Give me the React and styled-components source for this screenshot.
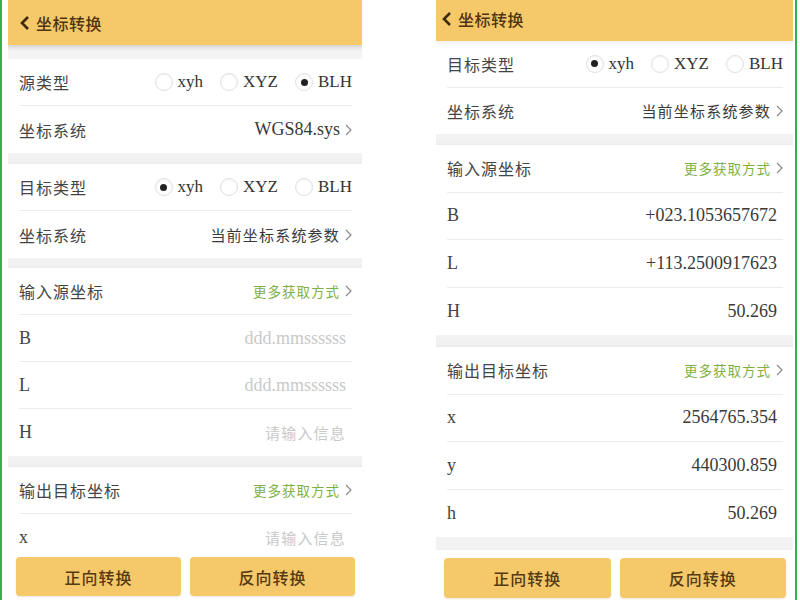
import React from "react";
import styled, { createGlobalStyle } from "styled-components";

const GlobalStyle = createGlobalStyle`
  html, body {
    margin: 0;
    padding: 0;
    background: #ffffff;
  }
  body {
    font-family: "Liberation Serif", "Noto Sans CJK SC", serif;
  }
`;

const Frame = styled.div`
  width: 797px;
  height: 600px;
  box-sizing: border-box;
  border-left: 2px solid #2fb34c;
  border-right: 2px solid #2fb34c;
  padding-left: 6px;
  display: flex;
  gap: 74px;
  background: #ffffff;
  overflow: hidden;
`;

const Phone = styled.div`
  width: ${(p) => p.$w}px;
  height: 600px;
  display: flex;
  flex-direction: column;
  background: #ffffff;
  overflow: hidden;
`;

const Header = styled.div`
  height: ${(p) => p.$h}px;
  flex-shrink: 0;
  display: flex;
  align-items: center;
  gap: 6px;
  padding-left: ${(p) => p.$pad}px;
  padding-bottom: ${(p) => p.$lift}px;
  box-sizing: border-box;
  background: #f5c86a;
  box-shadow: 0 2px 4px rgba(0, 0, 0, 0.08);
  position: relative;
  z-index: 1;
`;

const Title = styled.span`
  font-family: "Noto Sans CJK SC", sans-serif;
  font-size: 16px;
  font-weight: 500;
  color: #4f3510;
  letter-spacing: 0.5px;
`;

const Content = styled.div`
  flex: 1;
  overflow: hidden;
  background: #f3f3f3;
`;

const Gap = styled.div`
  height: ${(p) => p.$h}px;
  background: ${(p) =>
    p.$shade
      ? "linear-gradient(#e4e4e4, #f3f3f3 45%, #f5f5f5)"
      : "linear-gradient(#f3f3f3, #f1f1f1 80%, #e9e9e9)"};
`;

const Group = styled.div`
  background: #ffffff;
`;

const Row = styled.div`
  height: ${(p) => p.$h}px;
  margin: 0 10px 0 11px;
  display: flex;
  align-items: center;
  justify-content: space-between;
  box-sizing: border-box;
  border-bottom: ${(p) => (p.$last ? "none" : "1px solid #ededed")};
`;

const Label = styled.span`
  font-size: ${(p) => (p.$latin ? 18 : 16)}px;
  color: #444444;
  letter-spacing: ${(p) => (p.$latin ? 0 : 1)}px;
`;

const Right = styled.div`
  display: flex;
  align-items: center;
  gap: 5px;
  padding-right: ${(p) => (p.$inset ? 6 : 0)}px;
`;

const Value = styled.span`
  font-size: ${(p) => (p.$cjk ? 15 : 18)}px;
  color: ${(p) => (p.$placeholder ? "#c9c9c9" : "#3a3a3a")};
  letter-spacing: ${(p) => (p.$cjk ? 1.2 : 0)}px;
`;

const Link = styled.span`
  font-family: "Noto Sans CJK SC", sans-serif;
  font-size: 13.5px;
  color: #7fb144;
  letter-spacing: 1px;
`;

const Radios = styled.div`
  display: flex;
  align-items: center;
  gap: 17px;
`;

const RadioItem = styled.span`
  display: flex;
  align-items: center;
  gap: 5px;
  font-size: 17px;
  color: #333333;
`;

const Circle = styled.span`
  width: 18px;
  height: 18px;
  box-sizing: border-box;
  border-radius: 50%;
  border: 1px solid #e0e0e0;
  box-shadow: inset 0 1px 2px rgba(0, 0, 0, 0.05);
  display: flex;
  align-items: center;
  justify-content: center;

  &::after {
    content: "";
    width: 7px;
    height: 7px;
    border-radius: 50%;
    background: #222222;
    display: ${(p) => (p.$on ? "block" : "none")};
  }
`;

const BottomBar = styled.div`
  flex-shrink: 0;
  display: flex;
  gap: 9px;
  padding: 8px 7px ${(p) => p.$pb}px 8px;
  background: #ffffff;
`;

const Button = styled.button`
  flex: 1;
  height: ${(p) => p.$h}px;
  border: none;
  border-radius: 4px;
  background: #f5c86a;
  box-shadow: 0 1px 2px rgba(120, 90, 20, 0.15);
  font-family: "Noto Sans CJK SC", sans-serif;
  font-size: 16px;
  font-weight: 500;
  color: #553a12;
  letter-spacing: 1px;
  padding: 0;
`;

const Back = () => (
  <svg width="10" height="16" viewBox="0 0 10 16">
    <polyline points="8,2 2,8 8,14" fill="none" stroke="#3e2a0c" strokeWidth="2.6" strokeLinejoin="miter" />
  </svg>
);

const Chevron = () => (
  <svg width="7" height="12" viewBox="0 0 7 12">
    <polyline points="1,1 6,6 1,11" fill="none" stroke="#8a8a8a" strokeWidth="1.2" />
  </svg>
);

function RadioGroup({ options, value }) {
  return (
    <Radios>
      {options.map((o) => (
        <RadioItem key={o}>
          <Circle $on={o === value} />
          {o}
        </RadioItem>
      ))}
    </Radios>
  );
}

const TYPES = ["xyh", "XYZ", "BLH"];

function Item({ row, h, last }) {
  return (
    <Row $h={h} $last={last}>
      <Label $latin={row.latin}>{row.label}</Label>
      {row.kind === "radio" && <RadioGroup options={TYPES} value={row.value} />}
      {row.kind === "nav" && (
        <Right>
          <Value $cjk={row.cjk}>{row.value}</Value>
          <Chevron />
        </Right>
      )}
      {row.kind === "link" && (
        <Right>
          <Link>更多获取方式</Link>
          <Chevron />
        </Right>
      )}
      {row.kind === "input" && (
        <Right $inset>
          <Value $placeholder={row.placeholder} $cjk={row.cjk}>
            {row.value}
          </Value>
        </Right>
      )}
    </Row>
  );
}

function Screen({ cfg }) {
  return (
    <Phone $w={cfg.width}>
      <Header $h={cfg.headerH} $pad={cfg.headerPad} $lift={cfg.headerLift}>
        <Back />
        <Title>坐标转换</Title>
      </Header>
      <Content>
        {cfg.blocks.map((b, i) =>
          b.gap !== undefined ? (
            <Gap key={i} $h={b.gap} $shade={b.shade} />
          ) : (
            <Group key={i}>
              {b.rows.map((r, j) => (
                <Item key={j} row={r} h={b.h} last={j === b.rows.length - 1} />
              ))}
            </Group>
          )
        )}
      </Content>
      <BottomBar $pb={cfg.barPad}>
        <Button $h={cfg.btnH}>正向转换</Button>
        <Button $h={cfg.btnH}>反向转换</Button>
      </BottomBar>
    </Phone>
  );
}

const PLACE = "请输入信息";

const before = {
  width: 354,
  headerH: 45,
  headerPad: 12,
  headerLift: 0,
  btnH: 39,
  barPad: 4,
  blocks: [
    { gap: 14, shade: true },
    {
      h: 47,
      rows: [
        { label: "源类型", kind: "radio", value: "BLH" },
        { label: "坐标系统", kind: "nav", value: "WGS84.sys" },
      ],
    },
    { gap: 11 },
    {
      h: 47,
      rows: [
        { label: "目标类型", kind: "radio", value: "xyh" },
        { label: "坐标系统", kind: "nav", value: "当前坐标系统参数", cjk: true },
      ],
    },
    { gap: 10 },
    {
      h: 47,
      rows: [
        { label: "输入源坐标", kind: "link" },
        { label: "B", latin: true, kind: "input", value: "ddd.mmssssss", placeholder: true },
        { label: "L", latin: true, kind: "input", value: "ddd.mmssssss", placeholder: true },
        { label: "H", latin: true, kind: "input", value: PLACE, placeholder: true, cjk: true },
      ],
    },
    { gap: 11 },
    {
      h: 47,
      rows: [
        { label: "输出目标坐标", kind: "link" },
        { label: "x", latin: true, kind: "input", value: PLACE, placeholder: true, cjk: true },
      ],
    },
  ],
};

const after = {
  width: 357,
  headerH: 41,
  headerPad: 6,
  headerLift: 4,
  btnH: 40,
  barPad: 2,
  blocks: [
    {
      h: 46.5,
      rows: [
        { label: "目标类型", kind: "radio", value: "xyh" },
        { label: "坐标系统", kind: "nav", value: "当前坐标系统参数", cjk: true },
      ],
    },
    { gap: 11 },
    {
      h: 47.5,
      rows: [
        { label: "输入源坐标", kind: "link" },
        { label: "B", latin: true, kind: "input", value: "+023.1053657672" },
        { label: "L", latin: true, kind: "input", value: "+113.2500917623" },
        { label: "H", latin: true, kind: "input", value: "50.269" },
      ],
    },
    { gap: 12 },
    {
      h: 47.5,
      rows: [
        { label: "输出目标坐标", kind: "link" },
        { label: "x", latin: true, kind: "input", value: "2564765.354" },
        { label: "y", latin: true, kind: "input", value: "440300.859" },
        { label: "h", latin: true, kind: "input", value: "50.269" },
      ],
    },
    { gap: 20 },
  ],
};

export default function App() {
  return (
    <>
      <GlobalStyle />
      <Frame>
        <Screen cfg={before} />
        <Screen cfg={after} />
      </Frame>
    </>
  );
}
